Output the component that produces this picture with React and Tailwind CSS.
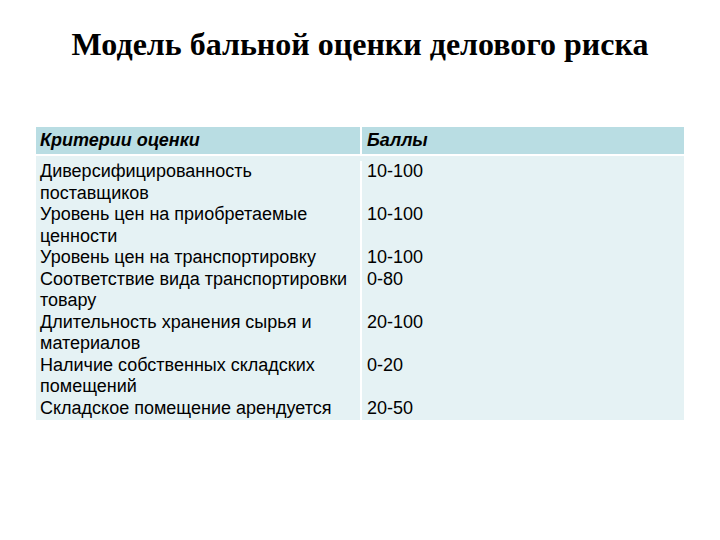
const rows = [
  { name: ["Диверсифицированность", "поставщиков"], score: "10-100" },
  { name: ["Уровень цен на приобретаемые", "ценности"], score: "10-100" },
  { name: ["Уровень цен на транспортировку"], score: "10-100" },
  { name: ["Соответствие вида транспортировки", "товару"], score: "0-80" },
  { name: ["Длительность хранения сырья и", "материалов"], score: "20-100" },
  { name: ["Наличие собственных складских", "помещений"], score: "0-20" },
  { name: ["Складское помещение арендуется"], score: "20-50" },
];

const App = () => {
  return (
    <div className="w-[720px] h-[540px] bg-white overflow-hidden">
      <h1 className="pt-[22px] text-center text-[32px] leading-[44px] font-bold text-black font-['Liberation_Serif',serif]">
        Модель бальной оценки делового риска
      </h1>
      <div className="mt-[61px] mx-[36px] font-['Liberation_Sans',Arial,sans-serif] text-[18px] text-black">
        <div className="flex h-[27px] bg-[#b9dde3] items-center italic font-bold">
          <div className="w-[324px] pl-[4px]">Критерии оценки</div>
          <div className="flex-1 h-full border-l-2 border-white flex items-center pl-[5px]">Баллы</div>
        </div>
        <div className="flex bg-[#e5f2f4] border-t-2 border-white pt-[5px] pb-[0px] leading-[21.55px]">
          <div className="w-[324px] pl-[4px]">
            {rows.map((r, i) => (
              <div key={i}>
                {r.name.map((l, j) => (
                  <div key={j} className="whitespace-nowrap">{l}</div>
                ))}
              </div>
            ))}
          </div>
          <div className="flex-1 border-l-2 border-white pl-[5px]">
            {rows.map((r, i) => (
              <div key={i} style={{ height: `${r.name.length * 21.55}px` }}>
                {r.score}
              </div>
            ))}
          </div>
        </div>
      </div>
    </div>
  );
};

export default App;
